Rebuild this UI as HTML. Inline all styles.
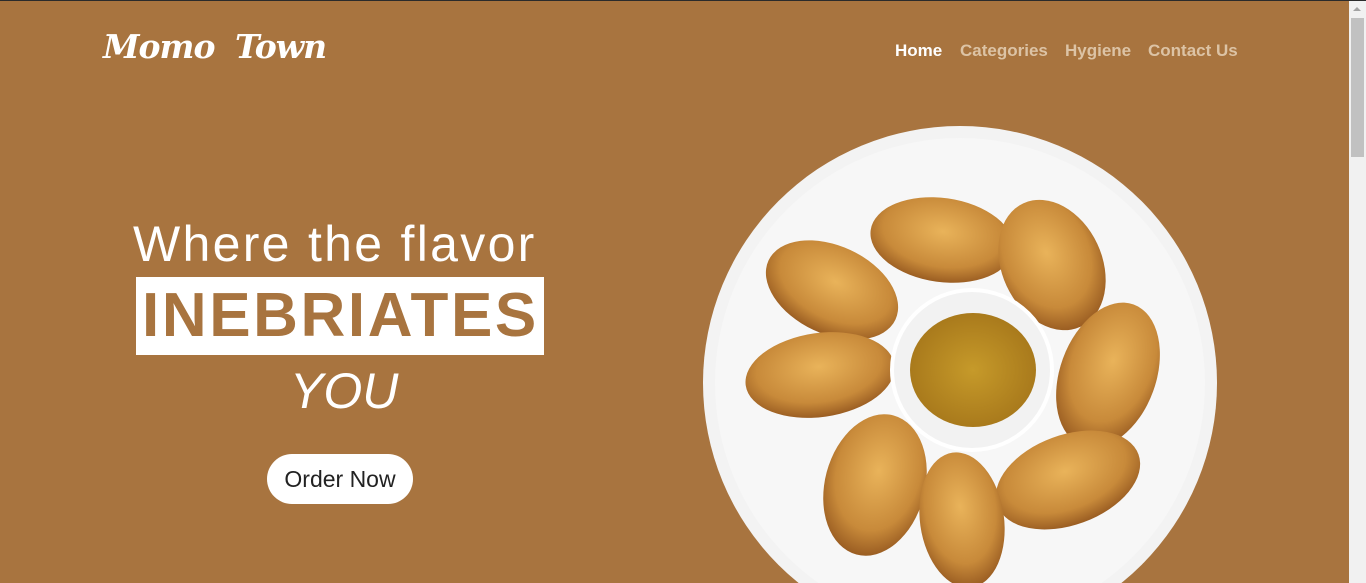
<!DOCTYPE html>
<html><head><meta charset="utf-8"><style>
html,body{margin:0;padding:0;overflow:hidden}
body{width:1366px;height:583px;background:#A8743F;position:relative;font-family:"Liberation Sans","DejaVu Sans",sans-serif}
.top{position:absolute;left:0;top:0;width:1366px;height:1px;background:#2b2b2b}
.sb{position:absolute;left:1349px;top:1px;width:17px;height:582px;background:#f1f1f1}
.thumb{position:absolute;left:2px;top:17px;width:13px;height:139px;background:#c1c1c1}
.arr{position:absolute;left:4px;top:6px;width:0;height:0;border-left:4px solid transparent;border-right:4px solid transparent;border-bottom:4px solid #a3a3a3}
.logo{position:absolute;left:103px;top:27px;color:#fff;font-family:"DejaVu Serif",serif;font-style:italic;font-weight:bold;font-size:33px;letter-spacing:-1px;word-spacing:10px}
.nav{position:absolute;top:41px;font-size:17px;font-weight:bold;color:#dcc3a5}
h1{position:absolute;margin:0;font-weight:normal;color:#fff;white-space:nowrap}
.btn{position:absolute;left:267px;top:454px;width:146px;height:50px;border-radius:25px;background:#fff;color:#222;font-size:23px;text-align:center;line-height:50px}
</style></head><body>
<div class="top"></div>
<div class="logo">Momo Town</div>
<div class="nav" style="left:895px;color:#fff">Home</div>
<div class="nav" style="left:960px">Categories</div>
<div class="nav" style="left:1065px">Hygiene</div>
<div class="nav" style="left:1148px">Contact Us</div>
<h1 style="left:133px;top:215px;font-size:50px;letter-spacing:2.3px">Where the flavor</h1>
<div style="position:absolute;left:136px;top:277px;width:408px;height:78px;background:#fff"></div>
<h1 style="left:142px;top:280px;font-size:62px;font-weight:bold;color:#A8743F;letter-spacing:2.6px">INEBRIATES</h1>
<h1 style="left:290px;top:362px;font-size:50px;font-style:italic">YOU</h1>
<div class="btn">Order Now</div>
<svg style="position:absolute;left:0;top:0" width="1349" height="583">
<defs>
<radialGradient id="d" cx="50%" cy="40%" r="60%"><stop offset="0" stop-color="#e9b35a"/><stop offset="0.7" stop-color="#c88a3a"/><stop offset="1" stop-color="#9a5d22"/></radialGradient>
<radialGradient id="s" cx="50%" cy="50%" r="50%"><stop offset="0" stop-color="#c69a2a"/><stop offset="1" stop-color="#a97a1c"/></radialGradient>
</defs>
<circle cx="960" cy="383" r="257" fill="#f3f3f3"/>
<circle cx="960" cy="383" r="245" fill="#f7f7f7"/>
<g fill="url(#d)">
<ellipse cx="942" cy="240" rx="72" ry="42" transform="rotate(8 942 240)"/>
<ellipse cx="1052" cy="265" rx="50" ry="68" transform="rotate(-25 1052 265)"/>
<ellipse cx="832" cy="290" rx="70" ry="44" transform="rotate(25 832 290)"/>
<ellipse cx="1108" cy="375" rx="48" ry="75" transform="rotate(20 1108 375)"/>
<ellipse cx="820" cy="375" rx="75" ry="42" transform="rotate(-8 820 375)"/>
<ellipse cx="1068" cy="480" rx="75" ry="45" transform="rotate(-20 1068 480)"/>
<ellipse cx="875" cy="485" rx="50" ry="72" transform="rotate(15 875 485)"/>
<ellipse cx="962" cy="520" rx="42" ry="68" transform="rotate(-8 962 520)"/>
</g>
<circle cx="972" cy="370" r="82" fill="#fff"/>
<circle cx="972" cy="370" r="78" fill="#f2f2f2"/>
<ellipse cx="973" cy="370" rx="63" ry="57" fill="url(#s)"/>
</svg>
<div class="sb"><div class="arr"></div><div class="thumb"></div></div>
</body></html>
